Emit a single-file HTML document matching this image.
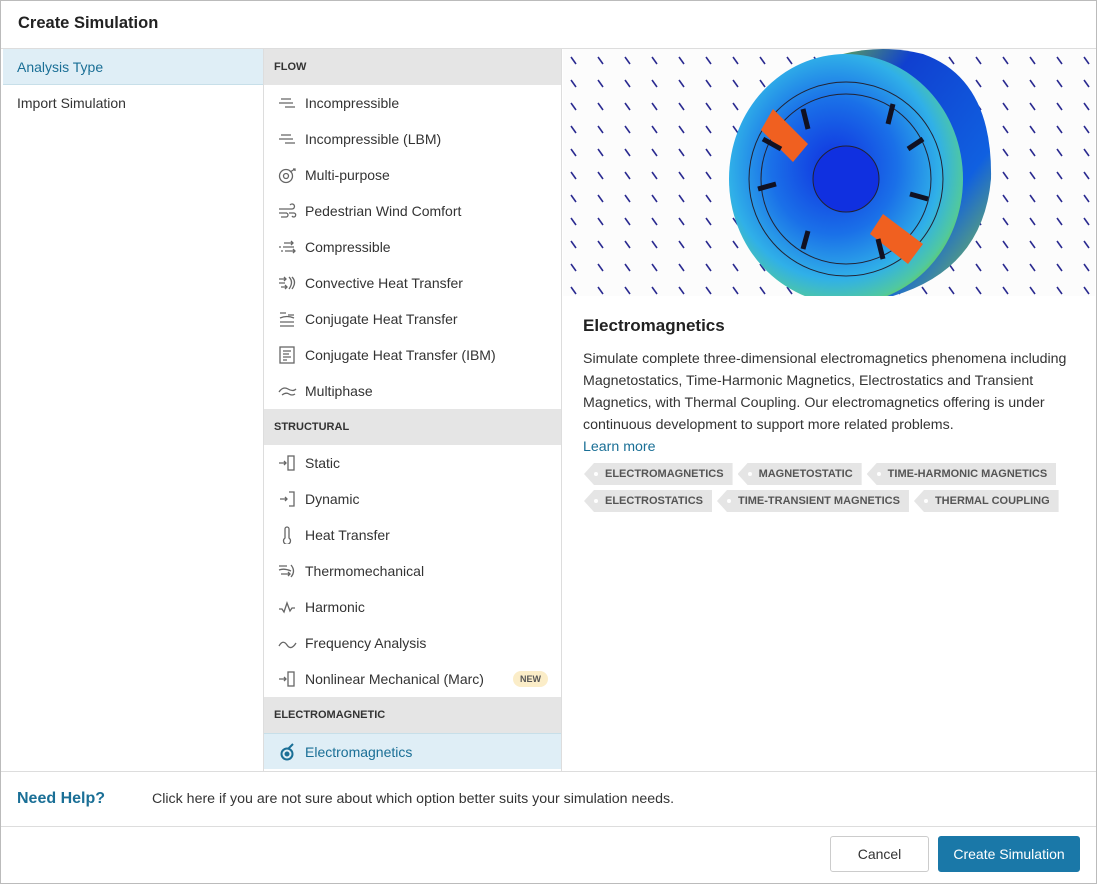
<!DOCTYPE html>
<html><head><meta charset="utf-8"><style>
*{box-sizing:border-box;margin:0;padding:0}
body{width:1097px;height:884px;background:#fff;font-family:"Liberation Sans",sans-serif;color:#333;position:relative;overflow:hidden}
.frame{position:absolute;left:0;top:0;width:1097px;height:884px;border:1px solid #bbb}
.title{position:absolute;left:18px;top:14px;font-size:16.5px;font-weight:bold;color:#222}
.hline{position:absolute;left:1px;right:1px;height:1px;background:#ddd}
.left{position:absolute;left:3px;top:49px;width:260px;height:722px}
.left div{height:36px;line-height:36px;padding-left:14px;font-size:14px}
.left .sel{background:#dfeef6;color:#1a6f96;border-bottom:1px solid #c7dfe9}
.mid{position:absolute;left:263px;top:49px;width:299px;height:722px;border-left:1px solid #ddd;border-right:1px solid #ddd}
.sh{height:36px;line-height:36px;background:#e5e5e5;font-size:11px;font-weight:bold;padding-left:10px;color:#333}
.it{height:36px;line-height:36px;font-size:14px;padding-left:41px;position:relative;color:#333}
.it svg{position:absolute;left:14px;top:9px}
.it.sel{background:#dfeef6;color:#1a6f96;border-top:1px solid #c7dfe9}
.new{position:absolute;right:13px;top:10px;height:16px;line-height:16px;padding:0 7px;border-radius:8px;background:#fbedc8;font-size:9px;font-weight:bold;color:#555}
.img{position:absolute;left:563px;top:49px;width:532px;height:247px;overflow:hidden;background:#fcfcfc}
.desc{position:absolute;left:583px;top:316px;width:500px}
.desc h2{font-size:17px;font-weight:bold;color:#222;margin-bottom:12px}
.desc p{font-size:14.2px;line-height:22px;color:#333}
.desc a{color:#1a6f96;font-size:14.2px;line-height:22px}
.tags{position:absolute;left:584px;top:463px;width:500px}
.tag{display:inline-block;height:22px;line-height:22px;background:#e5e5e5;font-size:11px;font-weight:bold;color:#555;padding:0 9px 0 21px;margin:0 5px 5px 0;position:relative;clip-path:polygon(10px 0,100% 0,100% 100%,10px 100%,0 50%)}
.tag:before{content:"";position:absolute;left:10px;top:9px;width:4px;height:4px;border-radius:2px;background:#fff}
.help{position:absolute;left:17px;top:790px;font-size:16px;font-weight:bold;color:#1a6f96}
.helpt{position:absolute;left:152px;top:791px;font-size:14.2px;color:#333}
.btn{position:absolute;top:836px;height:36px;line-height:34px;font-size:14px;text-align:center;border-radius:3px}
</style></head><body>
<div class="frame"></div>
<div class="title">Create Simulation</div>
<div class="hline" style="top:48px"></div>
<div class="left"><div class="sel">Analysis Type</div><div>Import Simulation</div></div>
<div class="mid">
<div class="sh">FLOW</div>
<div class="it"><svg width="20" height="18" stroke="#666" fill="none" stroke-width="1.3"><path d="M3 5h10M1 9h14M7 13h10"/></svg>Incompressible</div>
<div class="it"><svg width="20" height="18" stroke="#666" fill="none" stroke-width="1.3"><path d="M3 5h10M1 9h14M7 13h10"/></svg>Incompressible (LBM)</div>
<div class="it"><svg width="20" height="18" stroke="#666" fill="none" stroke-width="1.3"><circle cx="8" cy="10" r="6.5"/><circle cx="8" cy="10" r="2.5"/><path d="M12 6l5-3M15 3h2v2"/></svg>Multi-purpose</div>
<div class="it"><svg width="20" height="18" stroke="#666" fill="none" stroke-width="1.3"><path d="M1 7h13a2.5 2.5 0 1 0-2-4M1 11h8M3 15h5a2 2 0 1 0 0-4M11 11h5a2 2 0 1 1-2 3"/></svg>Pedestrian Wind Comfort</div>
<div class="it"><svg width="20" height="18" stroke="#666" fill="none" stroke-width="1.3"><path d="M6 5h9M13 3l2 2-2 2M1 9h2M5 9h11M3 13h2M7 13h10M15 11l2 2-2 2" /></svg>Compressible</div>
<div class="it"><svg width="20" height="18" stroke="#666" fill="none" stroke-width="1.3"><path d="M1 5h7M6 3l2 2-2 2M1 9h6M3 13h6M7 11l2 2-2 2M11 3q5 5 0 12M14 3q5 5 0 12"/></svg>Convective Heat Transfer</div>
<div class="it"><svg width="20" height="18" stroke="#666" fill="none" stroke-width="1.3"><path d="M2 3h6M10 5h6M2 8q7-3 14 0M2 12h14M2 16h14"/></svg>Conjugate Heat Transfer</div>
<div class="it"><svg width="20" height="18" stroke="#666" fill="none" stroke-width="1.3"><rect x="2" y="1" width="14" height="16"/><path d="M5 5h8M5 8h6M5 11h8M5 14h4"/></svg>Conjugate Heat Transfer (IBM)</div>
<div class="it"><svg width="20" height="18" stroke="#666" fill="none" stroke-width="1.3"><path d="M1 10q4-6 9-3t8 0M4 13q4-3 7-1t6 0"/></svg>Multiphase</div>
<div class="sh">STRUCTURAL</div>
<div class="it"><svg width="20" height="18" stroke="#666" fill="none" stroke-width="1.3"><path d="M1 9h7M6 7l2 2-2 2"/><rect x="10" y="2" width="6" height="14"/></svg>Static</div>
<div class="it"><svg width="20" height="18" stroke="#666" fill="none" stroke-width="1.3"><path d="M2 9h7M7 7l2 2-2 2M11 2h5v14h-5"/></svg>Dynamic</div>
<div class="it"><svg width="20" height="18" stroke="#666" fill="none" stroke-width="1.3"><path d="M7 12V3a2 2 0 0 1 4 0v9a3.5 3.5 0 1 1-4 0z"/></svg>Heat Transfer</div>
<div class="it"><svg width="20" height="18" stroke="#666" fill="none" stroke-width="1.3"><path d="M1 4h8M1 8q5-2 12 1M3 12h9M10 10l2 2-2 2M13 3q5 6 0 12"/></svg>Thermomechanical</div>
<div class="it"><svg width="20" height="18" stroke="#666" fill="none" stroke-width="1.3"><path d="M1 11h3l2 3 3-9 3 8 2-3h3"/></svg>Harmonic</div>
<div class="it"><svg width="20" height="18" stroke="#666" fill="none" stroke-width="1.3"><path d="M1 12q4-7 8-1t9-2"/></svg>Frequency Analysis</div>
<div class="it"><svg width="20" height="18" stroke="#666" fill="none" stroke-width="1.3"><path d="M1 9h7M6 7l2 2-2 2"/><rect x="10" y="2" width="6" height="14"/></svg>Nonlinear Mechanical (Marc)<span class="new">NEW</span></div>
<div class="sh">ELECTROMAGNETIC</div>
<div class="it sel"><svg width="20" height="18" stroke="#1a6f96" fill="none" stroke-width="2"><circle cx="9" cy="11" r="5.5"/><circle cx="9" cy="11" r="1.5" fill="#1a6f96"/><path d="M10 6l5-5"/></svg>Electromagnetics</div>
</div>
<div class="img"><svg width="532" height="247" viewBox="0 0 532 247">
<defs>
<pattern id="ar" width="27" height="23" patternUnits="userSpaceOnUse"><path d="M8 8l5 7" stroke="#2a2a90" stroke-width="1.6"/></pattern>
<radialGradient id="g1" cx="0.45" cy="0.45" r="0.6"><stop offset="0" stop-color="#1030e0"/><stop offset="0.45" stop-color="#1a70e8"/><stop offset="0.75" stop-color="#30b0e8"/><stop offset="0.92" stop-color="#50c8a0"/><stop offset="1" stop-color="#70d040"/></radialGradient>
<linearGradient id="g2" x1="0" y1="0" x2="1" y2="1"><stop offset="0" stop-color="#80d020"/><stop offset="0.3" stop-color="#1040d0"/><stop offset="0.7" stop-color="#1060e0"/><stop offset="1" stop-color="#90d030"/></linearGradient>
</defs>
<rect width="532" height="247" fill="#fcfcfc"/>
<rect width="532" height="247" fill="url(#ar)"/>
<path d="M240 20 Q300 -10 360 5 Q430 30 428 130 Q420 220 330 247 L250 247 Z" fill="url(#g2)"/>
<ellipse cx="283" cy="130" rx="117" ry="125" fill="url(#g1)"/>
<circle cx="283" cy="130" r="97" fill="none" stroke="#223" stroke-width="1"/>
<circle cx="283" cy="130" r="85" fill="none" stroke="#223" stroke-width="1"/>
<circle cx="283" cy="130" r="33" fill="#1030e0" stroke="#223" stroke-width="1"/>
<path d="M210 60l35 35-15 18-32-32z" fill="#f06020"/>
<path d="M320 165l40 30-15 20-38-30z" fill="#f06020"/>
<path d="M200 90l18 10M195 140l18-5M240 60l5 20M330 55l-5 20M360 90l-15 10M365 150l-18-5M320 210l-5-20M240 200l5-18" stroke="#112" stroke-width="5"/>
</svg></div>
<div class="desc"><h2>Electromagnetics</h2><p>Simulate complete three-dimensional electromagnetics phenomena including Magnetostatics, Time-Harmonic Magnetics, Electrostatics and Transient Magnetics, with Thermal Coupling. Our electromagnetics offering is under continuous development to support more related problems.</p><a>Learn more</a></div>
<div class="tags"><span class="tag">ELECTROMAGNETICS</span><span class="tag">MAGNETOSTATIC</span><span class="tag">TIME-HARMONIC MAGNETICS</span><br><span class="tag">ELECTROSTATICS</span><span class="tag">TIME-TRANSIENT MAGNETICS</span><span class="tag">THERMAL COUPLING</span></div>
<div class="hline" style="top:771px"></div>
<div class="help">Need Help?</div>
<div class="helpt">Click here if you are not sure about which option better suits your simulation needs.</div>
<div class="hline" style="top:826px"></div>
<div class="btn" style="left:830px;width:99px;border:1px solid #ccc;color:#333">Cancel</div>
<div class="btn" style="left:938px;width:142px;background:#1a78a8;color:#fff;border:1px solid #1a78a8">Create Simulation</div>
</body></html>
